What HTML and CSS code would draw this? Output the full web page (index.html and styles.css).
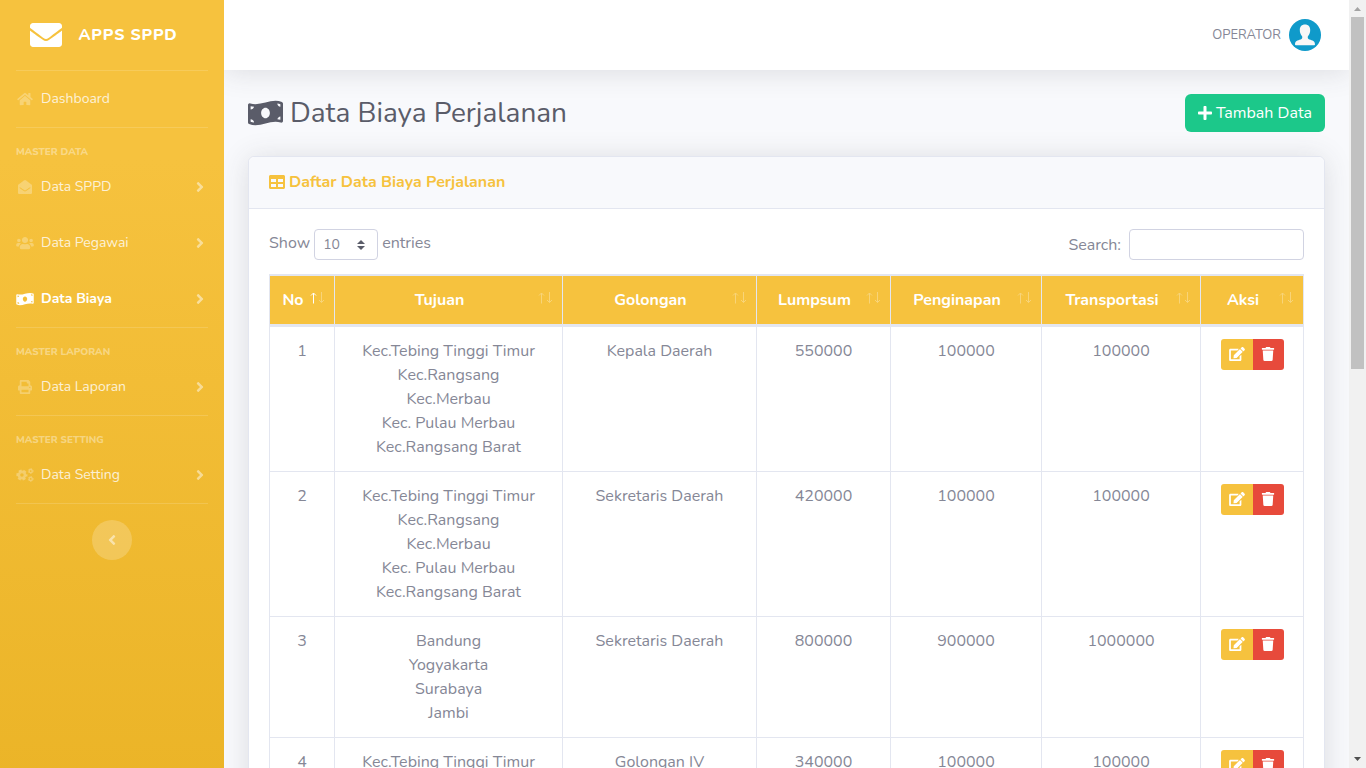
FILE: index.html
```html
<!DOCTYPE html>
<html lang="id">
<head>
<meta charset="utf-8">
<meta name="viewport" content="width=device-width, initial-scale=1">
<title>Apps SPPD - Data Biaya</title>
<link rel="stylesheet" href="styles.css">
</head>
<body>
<svg class="sprite" aria-hidden="true">
  <symbol id="envelope" viewBox="0 0 512 512"><path d="M502.3 190.8c3.9-3.1 9.7-.2 9.7 4.7V400c0 26.5-21.5 48-48 48H48c-26.5 0-48-21.5-48-48V195.6c0-5 5.7-7.8 9.7-4.7 22.4 17.4 52.1 39.5 154.1 113.6 21.1 15.4 56.7 47.8 92.2 47.6 35.7.3 72-32.8 92.3-47.6 102-74.1 131.6-96.3 154-113.7zM256 320c23.2.4 56.6-29.2 73.4-41.4 132.7-96.3 142.8-104.7 173.4-128.7 5.8-4.5 9.2-11.5 9.2-18.9v-19c0-26.5-21.5-48-48-48H48c-26.5 0-48 21.5-48 48v19c0 7.4 3.4 14.3 9.2 18.9 30.6 23.9 40.7 32.4 173.4 128.7 16.8 12.2 50.2 41.8 73.4 41.4z"/></symbol>
  <symbol id="home" viewBox="0 0 576 512"><path d="M280.37 148.26L96 300.11V464a16 16 0 0 0 16 16l112.06-.29a16 16 0 0 0 15.92-16V368a16 16 0 0 1 16-16h64a16 16 0 0 1 16 16v95.64a16 16 0 0 0 16 16.05L464 480a16 16 0 0 0 16-16V300L295.67 148.26a12.19 12.19 0 0 0-15.3 0zM571.6 251.47L488 182.56V44.05a12 12 0 0 0-12-12h-56a12 12 0 0 0-12 12v72.61L318.47 43a48 48 0 0 0-61 0L4.34 251.47a12 12 0 0 0-1.6 16.9l25.5 31A12 12 0 0 0 45.15 301l235.22-193.74a12.19 12.19 0 0 1 15.3 0L530.9 301a12 12 0 0 0 16.9-1.6l25.5-31a12 12 0 0 0-1.7-16.93z"/></symbol>
  <symbol id="envelope-open" viewBox="0 0 512 512"><path d="M512 464c0 26.51-21.49 48-48 48H48c-26.51 0-48-21.49-48-48V200.724a48 48 0 0 1 18.387-37.776c24.913-19.529 45.501-35.365 164.2-121.511C199.412 29.17 232.797-.347 256 .003c23.198-.354 56.596 29.172 73.413 41.433 118.687 86.137 139.303 101.995 164.2 121.512A48 48 0 0 1 512 200.724V464zm-65.666-196.605c-2.563-3.728-7.7-4.595-11.339-1.907-22.845 16.873-55.462 40.705-105.582 77.079-16.825 12.266-50.21 41.781-73.413 41.43-23.211.344-56.559-29.143-73.413-41.43-50.114-36.37-82.734-60.204-105.582-77.079-3.639-2.688-8.776-1.821-11.339 1.907l-9.072 13.196a7.998 7.998 0 0 0 1.839 10.967c22.887 16.899 55.454 40.69 105.303 76.868 20.274 14.781 56.524 47.813 92.264 47.573 35.724.242 71.961-32.771 92.263-47.573 49.85-36.179 82.418-59.97 105.303-76.868a7.998 7.998 0 0 0 1.839-10.967l-9.071-13.196z"/></symbol>
  <symbol id="users" viewBox="0 0 640 512"><path d="M96 224c35.3 0 64-28.7 64-64s-28.7-64-64-64-64 28.7-64 64 28.7 64 64 64zm448 0c35.3 0 64-28.7 64-64s-28.7-64-64-64-64 28.7-64 64 28.7 64 64 64zm32 32h-64c-17.6 0-33.5 7.1-45.1 18.6 40.3 22.1 68.9 62 75.1 109.4h66c17.7 0 32-14.3 32-32v-32c0-35.3-28.7-64-64-64zm-256 0c61.9 0 112-50.1 112-112S381.9 32 320 32 208 82.1 208 144s50.1 112 112 112zm76.8 32h-8.3c-20.8 10-43.9 16-68.5 16s-47.6-6-68.5-16h-8.3C179.6 288 128 339.6 128 403.2V432c0 26.5 21.5 48 48 48h288c26.5 0 48-21.5 48-48v-28.8c0-63.6-51.6-115.2-115.2-115.2zm-223.7-13.4C161.5 263.1 145.6 256 128 256H64c-35.3 0-64 28.7-64 64v32c0 17.7 14.3 32 32 32h65.9c6.3-47.4 34.9-87.3 75.2-109.4z"/></symbol>
  <symbol id="money" viewBox="0 0 640 512"><path d="M621.16 54.46C582.37 38.19 543.55 32 504.75 32c-123.17-.01-246.33 62.34-369.5 62.34-30.89 0-61.76-3.92-92.65-13.72-3.47-1.1-6.95-1.62-10.35-1.62C15.04 79 0 92.32 0 110.81v317.26c0 12.63 7.23 24.6 18.84 29.46C57.63 473.81 96.45 480 135.25 480c123.17 0 246.34-62.35 369.51-62.35 30.89 0 61.76 3.92 92.65 13.72 3.47 1.1 6.95 1.62 10.35 1.62 17.21 0 32.25-13.32 32.25-31.81V83.93c-.01-12.64-7.24-24.6-18.85-29.47zM48 132.22c20.12 5.04 41.12 7.57 62.72 8.93C104.84 170.54 79 192.69 48 192.69v-60.47zm0 285v-47.78c34.37 0 62.18 27.27 63.71 61.4-22.53-1.81-43.59-6.31-63.71-13.62zM320 352c-44.19 0-80-42.99-80-96 0-53.02 35.82-96 80-96s80 42.98 80 96c0 53.03-35.83 96-80 96zm272 27.78c-17.52-4.39-35.71-6.85-54.32-8.44 5.87-26.08 27.5-45.88 54.32-49.28v57.72zm0-236.11c-30.89-3.91-54.86-29.7-55.81-61.55 19.54 2.17 38.09 6.23 55.81 12.66v48.89z"/></symbol>
  <symbol id="print" viewBox="0 0 512 512"><path d="M448 192V77.25c0-8.49-3.37-16.62-9.37-22.63L393.37 9.37c-6-6-14.14-9.37-22.63-9.37H96C78.33 0 64 14.33 64 32v160c-35.35 0-64 28.65-64 64v112c0 8.84 7.16 16 16 16h48v96c0 17.67 14.33 32 32 32h320c17.67 0 32-14.33 32-32v-96h48c8.84 0 16-7.16 16-16V256c0-35.35-28.65-64-64-64zm-64 256H128v-96h256v96zm0-224H128V64h192v48c0 8.84 7.16 16 16 16h48v96zm48 72c-13.25 0-24-10.75-24-24 0-13.26 10.75-24 24-24s24 10.74 24 24c0 13.25-10.75 24-24 24z"/></symbol>
  <symbol id="cogs" viewBox="0 0 640 512"><g fill="none" stroke="currentColor"><circle cx="208" cy="256" r="112" stroke-width="96"/><circle cx="208" cy="256" r="172" stroke-width="64" stroke-dasharray="110 70.12" stroke-dashoffset="55"/><circle cx="528" cy="112" r="56" stroke-width="48"/><circle cx="528" cy="112" r="88" stroke-width="34" stroke-dasharray="52 40.15"/><circle cx="528" cy="400" r="56" stroke-width="48"/><circle cx="528" cy="400" r="88" stroke-width="34" stroke-dasharray="52 40.15"/></g></symbol>
  <symbol id="angle" viewBox="0 0 256 512"><path d="M224.3 273l-136 136c-9.4 9.4-24.6 9.4-33.9 0l-22.6-22.6c-9.4-9.4-9.4-24.6 0-33.9l96.4-96.4-96.4-96.4c-9.4-9.4-9.4-24.6 0-33.9L54.3 103c9.4-9.4 24.6-9.4 33.9 0l136 136c9.5 9.4 9.5 24.6.1 34z"/></symbol>
  <symbol id="plus" viewBox="0 0 448 512"><path d="M416 208H272V64c0-17.67-14.33-32-32-32h-32c-17.67 0-32 14.33-32 32v144H32c-17.67 0-32 14.33-32 32v32c0 17.67 14.33 32 32 32h144v144c0 17.67 14.33 32 32 32h32c17.67 0 32-14.33 32-32V304h144c17.67 0 32-14.33 32-32v-32c0-17.67-14.33-32-32-32z"/></symbol>
  <symbol id="table" viewBox="0 0 512 512"><path d="M464 32H48C21.49 32 0 53.49 0 80v352c0 26.51 21.49 48 48 48h416c26.51 0 48-21.49 48-48V80c0-26.51-21.49-48-48-48zM224 416H64v-96h160v96zm0-160H64v-96h160v96zm224 160H288v-96h160v96zm0-160H288v-96h160v96z"/></symbol>
  <symbol id="edit" viewBox="0 0 576 512"><path d="M402.6 83.2l90.2 90.2c3.8 3.8 3.8 10 0 13.8L274.4 405.6l-92.8 10.3c-12.4 1.4-22.9-9.1-21.5-21.5l10.3-92.8L388.8 83.2c3.8-3.8 10-3.8 13.8 0zm162-22.9l-48.8-48.8c-15.2-15.2-39.9-15.2-55.2 0l-35.4 35.4c-3.8 3.8-3.8 10 0 13.8l90.2 90.2c3.8 3.8 10 3.8 13.8 0l35.4-35.4c15.2-15.3 15.2-40 0-55.2zM384 346.2V448H64V128h229.8c3.2 0 6.2-1.3 8.5-3.5l40-40c7.6-7.6 2.2-20.5-8.5-20.5H48C21.5 64 0 85.5 0 112v352c0 26.5 21.5 48 48 48h352c26.5 0 48-21.5 48-48V306.2c0-10.7-12.9-16-20.5-8.5l-40 40c-2.2 2.3-3.5 5.3-3.5 8.5z"/></symbol>
  <symbol id="trash" viewBox="0 0 448 512"><path d="M432 32H312l-9.4-18.7A24 24 0 0 0 281.1 0H166.8a23.72 23.72 0 0 0-21.4 13.3L136 32H16A16 16 0 0 0 0 48v32a16 16 0 0 0 16 16h416a16 16 0 0 0 16-16V48a16 16 0 0 0-16-16zM53.2 467a48 48 0 0 0 47.9 45h245.8a48 48 0 0 0 47.9-45L416 128H32z"/></symbol>
  <symbol id="arrow-up" viewBox="0 0 7 12"><path d="M3.5 11.500V1M1 3.500l2.500-2.500L6 3.500" fill="none" stroke="currentColor" stroke-width="1"/></symbol>
  <symbol id="arrow-down" viewBox="0 0 7 12"><path d="M3.500 0v10.500M1 8l2.500 2.500L6 8" fill="none" stroke="currentColor" stroke-width="1"/></symbol>
</svg>
<div class="app">
  <nav class="sidebar">
    <a class="brand" href="#"><svg class="brand-icon"><use href="#envelope"/></svg><span>APPS SPPD</span></a>
    <hr>
    <a class="nav-link" href="#"><svg><use href="#home"/></svg><span>Dashboard</span></a>
    <hr>
    <div class="nav-heading">MASTER DATA</div>
    <a class="nav-link" href="#"><svg><use href="#envelope-open"/></svg><span>Data SPPD</span><svg class="caret"><use href="#angle"/></svg></a>
    <a class="nav-link" href="#"><svg><use href="#users"/></svg><span>Data Pegawai</span><svg class="caret"><use href="#angle"/></svg></a>
    <a class="nav-link active" href="#"><svg><use href="#money"/></svg><span>Data Biaya</span><svg class="caret"><use href="#angle"/></svg></a>
    <hr>
    <div class="nav-heading">MASTER LAPORAN</div>
    <a class="nav-link" href="#"><svg><use href="#print"/></svg><span>Data Laporan</span><svg class="caret"><use href="#angle"/></svg></a>
    <hr>
    <div class="nav-heading">MASTER SETTING</div>
    <a class="nav-link" href="#"><svg><use href="#cogs"/></svg><span>Data Setting</span><svg class="caret"><use href="#angle"/></svg></a>
    <hr>
    <button class="toggle" type="button" aria-label="Toggle sidebar"><svg><use href="#angle"/></svg></button>
  </nav>
  <div class="content">
    <header class="topbar">
      <a class="user" href="#"><span>OPERATOR</span>
        <svg class="avatar" viewBox="0 0 32 32"><circle cx="16" cy="16" r="16" fill="#0f9aca"/><path fill="#f7f7f7" d="M16 5.500c3.300 0 5.200 2.200 5.200 5.400 0 2.600-.9 4.900-2.300 6.300-.5 1.600 0 2.600 1.500 3.200 3 .9 5.600 1.400 5.600 5.100 0 .4-.4.700-.8.700H6.800c-.4 0-.8-.3-.8-.7 0-3.700 2.600-4.200 5.600-5.100 1.500-.6 2-1.600 1.500-3.200-1.400-1.400-2.300-3.700-2.300-6.300 0-3.200 1.900-5.400 5.200-5.400z"/></svg>
      </a>
    </header>
    <main>
      <div class="page-head">
        <h1><svg><use href="#money"/></svg>Data Biaya Perjalanan</h1>
        <a class="add" href="#"><svg><use href="#plus"/></svg>Tambah Data</a>
      </div>
      <section class="card">
        <h2 class="card-head"><svg><use href="#table"/></svg>Daftar Data Biaya Perjalanan</h2>
        <div class="card-body">
          <div class="controls">
            <label class="length">Show <select><option>10</option><option>25</option><option>50</option><option>100</option></select> entries</label>
            <label class="search">Search: <input type="search"></label>
          </div>
          <table>
            <colgroup><col class="c-no"><col class="c-dest"><col class="c-rank"><col class="c-lump"><col class="c-inn"><col class="c-trans"><col class="c-act"></colgroup>
            <thead>
              <tr>
                <th class="sorted">No<span class="sort"><svg><use href="#arrow-up"/></svg><svg><use href="#arrow-down"/></svg></span></th>
                <th>Tujuan<span class="sort"><svg><use href="#arrow-up"/></svg><svg><use href="#arrow-down"/></svg></span></th>
                <th>Golongan<span class="sort"><svg><use href="#arrow-up"/></svg><svg><use href="#arrow-down"/></svg></span></th>
                <th>Lumpsum<span class="sort"><svg><use href="#arrow-up"/></svg><svg><use href="#arrow-down"/></svg></span></th>
                <th>Penginapan<span class="sort"><svg><use href="#arrow-up"/></svg><svg><use href="#arrow-down"/></svg></span></th>
                <th>Transportasi<span class="sort"><svg><use href="#arrow-up"/></svg><svg><use href="#arrow-down"/></svg></span></th>
                <th>Aksi<span class="sort"><svg><use href="#arrow-up"/></svg><svg><use href="#arrow-down"/></svg></span></th>
              </tr>
            </thead>
            <tbody>
              <tr><td>1</td><td>Kec.Tebing Tinggi Timur<br>Kec.Rangsang<br>Kec.Merbau<br>Kec. Pulau Merbau<br>Kec.Rangsang Barat</td><td>Kepala Daerah</td><td>550000</td><td>100000</td><td>100000</td><td><div class="actions"><button type="button" class="edit" aria-label="Edit"><svg><use href="#edit"/></svg></button><button type="button" class="delete" aria-label="Hapus"><svg><use href="#trash"/></svg></button></div></td></tr>
              <tr><td>2</td><td>Kec.Tebing Tinggi Timur<br>Kec.Rangsang<br>Kec.Merbau<br>Kec. Pulau Merbau<br>Kec.Rangsang Barat</td><td>Sekretaris Daerah</td><td>420000</td><td>100000</td><td>100000</td><td><div class="actions"><button type="button" class="edit" aria-label="Edit"><svg><use href="#edit"/></svg></button><button type="button" class="delete" aria-label="Hapus"><svg><use href="#trash"/></svg></button></div></td></tr>
              <tr><td>3</td><td>Bandung<br>Yogyakarta<br>Surabaya<br>Jambi</td><td>Sekretaris Daerah</td><td>800000</td><td>900000</td><td>1000000</td><td><div class="actions"><button type="button" class="edit" aria-label="Edit"><svg><use href="#edit"/></svg></button><button type="button" class="delete" aria-label="Hapus"><svg><use href="#trash"/></svg></button></div></td></tr>
              <tr><td>4</td><td>Kec.Tebing Tinggi Timur</td><td>Golongan IV</td><td>340000</td><td>100000</td><td>100000</td><td><div class="actions"><button type="button" class="edit" aria-label="Edit"><svg><use href="#edit"/></svg></button><button type="button" class="delete" aria-label="Hapus"><svg><use href="#trash"/></svg></button></div></td></tr>
            </tbody>
          </table>
        </div>
      </section>
    </main>
  </div>
  <div class="scrollbar" aria-hidden="true">
    <svg class="scroll-arrow" viewBox="0 0 17 17"><path d="M5 11h7L8.500 7z" fill="#a3a3a3"/></svg>
    <div class="track"><div class="thumb"></div></div>
    <svg class="scroll-arrow" viewBox="0 0 17 17"><path d="M5 6h7l-3.500 4z" fill="#505050"/></svg>
  </div>
</div>
</body>
</html>
```
FILE: styles.css
```css
*, *::before, *::after { box-sizing: border-box; }
body {
  margin: 0;
  height: 100vh;
  overflow: hidden;
  font-family: Nunito, "Open Sans", "Noto Sans", sans-serif;
  font-size: 16px;
  line-height: 24px;
  color: #858796;
  background: #f8f9fc;
}
a { color: inherit; text-decoration: none; }
button, input, select { font: inherit; color: inherit; }
button { border: 0; padding: 0; cursor: pointer; }
svg { fill: currentColor; flex: none; }
.sprite { display: none; }

.app { display: flex; height: 100%; }

.sidebar {
  flex: none;
  width: 224px;
  display: flex;
  flex-direction: column;
  color: rgba(255, 255, 255, .8);
  background: linear-gradient(180deg, #f6c23e 160px, #dda20a 1597px);
}
.sidebar hr {
  width: calc(100% - 32px);
  height: 1px;
  margin: 0 16px;
  border: 0;
  background: rgba(255, 255, 255, .15);
}
.brand {
  display: flex;
  align-items: center;
  justify-content: center;
  height: 70px;
  padding: 0 14px;
  color: #fff;
  font-weight: 800;
  letter-spacing: .05em;
}
.brand span { padding: 0 16px; }
.brand-icon { width: 32px; height: 32px; }
.nav-link {
  display: flex;
  align-items: center;
  gap: 7px;
  height: 56px;
  padding: 0 16px;
  font-size: 14px;
}
.nav-link svg { width: 18px; height: 14px; opacity: .35; }
.nav-link .caret { width: 16px; height: 16px; margin-left: auto; opacity: .6; }
.nav-link.active { color: #fff; font-weight: 700; }
.nav-link.active svg { opacity: 1; }
.nav-link.active .caret { opacity: .5; }
.nav-heading {
  height: 31px;
  padding: 16px 16px 0;
  font-size: 10px;
  line-height: 16px;
  font-weight: 800;
  color: rgba(255, 255, 255, .4);
}
.toggle {
  display: flex;
  align-items: center;
  justify-content: center;
  align-self: center;
  width: 40px;
  height: 40px;
  margin: 16px 0;
  border-radius: 50%;
  color: rgba(255, 255, 255, .5);
  background: rgba(255, 255, 255, .2);
}
.toggle svg { width: 8px; height: 16px; transform: rotate(180deg); }

.content { flex: 1; min-width: 0; overflow: hidden; }
.topbar {
  display: flex;
  align-items: center;
  justify-content: flex-end;
  height: 70px;
  padding: 0 28px;
  background: #fff;
  box-shadow: 0 2px 28px rgba(58, 59, 69, .15);
}
.user { display: flex; align-items: center; gap: 8px; font-size: 13px; }
.avatar { width: 32px; height: 32px; }

main { padding: 24px; }
.page-head {
  display: flex;
  align-items: center;
  justify-content: space-between;
  margin-bottom: 24px;
}
h1 {
  display: flex;
  align-items: center;
  gap: 7px;
  margin: 0;
  font-size: 28px;
  line-height: 34px;
  font-weight: 400;
  color: #5a5c69;
}
h1 svg { width: 35px; height: 28px; }
.add {
  display: flex;
  align-items: center;
  gap: 4px;
  padding: 7px 13px;
  border-radius: 6px;
  color: #fff;
  background: #1cc88a;
}
.add svg { width: 14px; height: 16px; }

.card {
  border: 1px solid #e3e6f0;
  border-radius: 6px;
  background: #fff;
  box-shadow: 0 2px 28px rgba(58, 59, 69, .15);
}
.card-head {
  display: flex;
  align-items: center;
  gap: 4px;
  margin: 0;
  padding: 13px 20px 14px;
  border-bottom: 1px solid #e3e6f0;
  border-radius: 6px 6px 0 0;
  font-size: 16px;
  line-height: 24px;
  font-weight: 700;
  color: #f6c23e;
  background: #f8f9fc;
}
.card-head svg { width: 16px; height: 16px; }
.card-body { padding: 20px; }

.controls { display: flex; justify-content: space-between; margin-bottom: 14px; }
.controls label { display: flex; align-items: center; gap: 8px; }
.controls .length { align-items: flex-start; gap: 4px; line-height: 28px; }
.controls select, .controls input {
  height: 31px;
  border: 1px solid #d1d3e2;
  border-radius: 4px;
  font-size: 14px;
}
.controls select {
  width: 64px;
  padding: 0 8px;
  appearance: none;
  background: #fff url("data:image/svg+xml,%3csvg xmlns='http://www.w3.org/2000/svg' viewBox='0 0 4 5'%3e%3cpath fill='%235a5c69' d='M2 0L0 2h4zm0 5L0 3h4z'/%3e%3c/svg%3e") no-repeat right 12px center / 8px 10px;
}
.controls input { width: 175px; padding: 4px 8px; background: #fff; }

table {
  width: 100%;
  table-layout: fixed;
  border-collapse: separate;
  border-spacing: 0;
  border-right: 1px solid #e3e6f0;
  text-align: center;
}
.c-no { width: 65px; }
.c-dest { width: 228px; }
.c-rank { width: 194px; }
.c-lump { width: 134px; }
.c-inn { width: 151px; }
.c-trans { width: 159px; }
.c-act { width: 103px; }
th {
  position: relative;
  padding: 12px 30px 12px 12px;
  border: solid #e3e6f0;
  border-width: 2px 0 3px 1px;
  font-weight: 700;
  color: #fff;
  background: #f6c23e;
}
.sort {
  position: absolute;
  top: 16px;
  right: 9px;
  display: flex;
  gap: 1px;
}
.sort svg { width: 7px; height: 12px; opacity: .3; }
.sorted .sort svg:first-child { opacity: 1; }
td {
  padding: 12px;
  border: solid #e3e6f0;
  border-width: 0 0 1px 1px;
  vertical-align: top;
}
.actions { display: flex; justify-content: center; }
.actions button {
  display: flex;
  align-items: center;
  justify-content: center;
  height: 31px;
  padding-bottom: 2px;
  color: #fff;
}
.actions svg { height: 14px; width: 16px; }
.edit { width: 32px; border-radius: 3px 0 0 3px; background: #f6c23e; }
.delete { width: 31px; border-radius: 0 3px 3px 0; background: #e74a3b; }

.scrollbar {
  flex: none;
  display: flex;
  flex-direction: column;
  width: 17px;
  background: #f1f1f1;
}
.scroll-arrow { width: 17px; height: 17px; }
.track { flex: 1; padding: 0 2px; }
.thumb { height: 48%; background: #c1c1c1; }
```
